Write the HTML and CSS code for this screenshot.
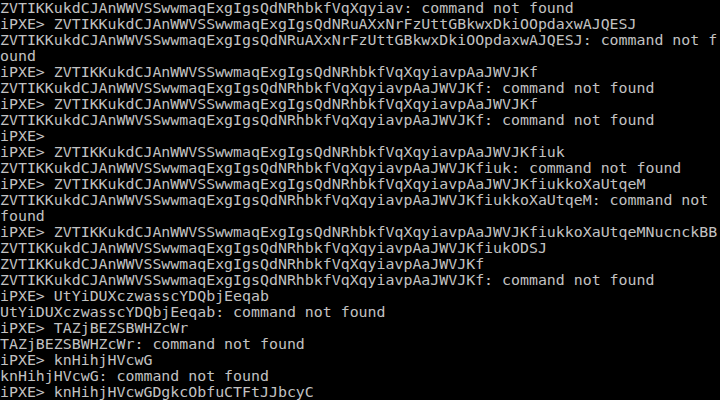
FILE: index.html
```html
<!DOCTYPE html>
<html lang="en">
<head>
    <meta charset="UTF-8">
    <meta name="viewport" content="width=device-width, initial-scale=1.0">
    <title>iPXE console</title>
    <link rel="stylesheet" href="styles.css">
</head>
<body>
<pre class="console">ZVTIKKukdCJAnWWVSSwwmaqExgIgsQdNRhbkfVqXqyiav: command not found
iPXE&gt; ZVTIKKukdCJAnWWVSSwwmaqExgIgsQdNRuAXxNrFzUttGBkwxDkiOOpdaxwAJQESJ
ZVTIKKukdCJAnWWVSSwwmaqExgIgsQdNRuAXxNrFzUttGBkwxDkiOOpdaxwAJQESJ: command not f
ound
iPXE&gt; ZVTIKKukdCJAnWWVSSwwmaqExgIgsQdNRhbkfVqXqyiavpAaJWVJKf
ZVTIKKukdCJAnWWVSSwwmaqExgIgsQdNRhbkfVqXqyiavpAaJWVJKf: command not found
iPXE&gt; ZVTIKKukdCJAnWWVSSwwmaqExgIgsQdNRhbkfVqXqyiavpAaJWVJKf
ZVTIKKukdCJAnWWVSSwwmaqExgIgsQdNRhbkfVqXqyiavpAaJWVJKf: command not found
iPXE&gt;
iPXE&gt; ZVTIKKukdCJAnWWVSSwwmaqExgIgsQdNRhbkfVqXqyiavpAaJWVJKfiuk
ZVTIKKukdCJAnWWVSSwwmaqExgIgsQdNRhbkfVqXqyiavpAaJWVJKfiuk: command not found
iPXE&gt; ZVTIKKukdCJAnWWVSSwwmaqExgIgsQdNRhbkfVqXqyiavpAaJWVJKfiukkoXaUtqeM
ZVTIKKukdCJAnWWVSSwwmaqExgIgsQdNRhbkfVqXqyiavpAaJWVJKfiukkoXaUtqeM: command not
found
iPXE&gt; ZVTIKKukdCJAnWWVSSwwmaqExgIgsQdNRhbkfVqXqyiavpAaJWVJKfiukkoXaUtqeMNucnckBB
ZVTIKKukdCJAnWWVSSwwmaqExgIgsQdNRhbkfVqXqyiavpAaJWVJKfiukODSJ
ZVTIKKukdCJAnWWVSSwwmaqExgIgsQdNRhbkfVqXqyiavpAaJWVJKf
ZVTIKKukdCJAnWWVSSwwmaqExgIgsQdNRhbkfVqXqyiavpAaJWVJKf: command not found
iPXE&gt; UtYiDUXczwasscYDQbjEeqab
UtYiDUXczwasscYDQbjEeqab: command not found
iPXE&gt; TAZjBEZSBWHZcWr
TAZjBEZSBWHZcWr: command not found
iPXE&gt; knHihjHVcwG
knHihjHVcwG: command not found
iPXE&gt; knHihjHVcwGDgkcObfuCTFtJJbcyC</pre>
</body>
</html>
```

FILE: styles.css
```css
* {
    box-sizing: border-box;
    margin: 0;
    padding: 0;
}
html, body {
    background-color: #000;
    width: 720px;
    height: 400px;
    overflow: hidden;
}
.console {
    font-family: "DejaVu Sans Mono", monospace;
    font-size: 14.9px;
    line-height: 16px;
    color: #c2c2c2;
    white-space: pre;
}
```
